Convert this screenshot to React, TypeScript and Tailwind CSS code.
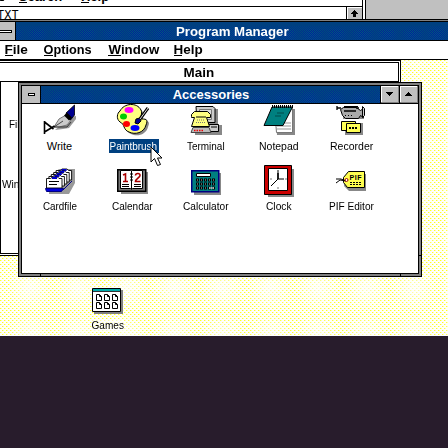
import React from "react";

const label = "font-['Liberation_Sans',sans-serif] text-[11px] leading-[13px] text-black whitespace-nowrap";
const title = "font-['Liberation_Sans',sans-serif] font-bold text-[13px] whitespace-nowrap";

function Fit({ children, w, className = "" }: { children: string; w: number; className?: string }) {
  const ref = React.useRef<HTMLSpanElement>(null);
  const [scale, setScale] = React.useState(1);
  React.useLayoutEffect(() => {
    if (ref.current) setScale(w / ref.current.offsetWidth);
  }, [w]);
  return (
    <span className="flex justify-center" style={{ width: w }}>
      <span ref={ref} className={`block shrink-0 ${className}`} style={{ transform: `scaleX(${scale})` }}>
        {children}
      </span>
    </span>
  );
}

function Svg({ children, w = 34, h = 32 }: { children: React.ReactNode; w?: number; h?: number }) {
  return (
    <svg width={w} height={h} viewBox={`0 0 ${w} ${h}`} fill="none" className="block shrink-0 overflow-visible">
      {children}
    </svg>
  );
}

const WriteIcon = () => (
  <Svg>
    <path d="M10 25l8-1 6-1 7-9v-3l-6 1z" fill="#999" />
    <path d="M9 22l5-8 7-4 5 5-4 5-8 2z" fill="#ccc" stroke="#777" strokeWidth="1" />
    <path d="M21 8L29.500 0v10l-4 5z" fill="#000090" stroke="#000" strokeWidth=".8" />
    <path d="M20.500 9l5 5" stroke="#000" strokeWidth="4" />
    <path d="M9 22l9-6M9 22h13l4-5" stroke="#222" strokeWidth=".8" />
    <path d="M-.5 16v13M-.5 17l9 7M-.5 27l10-6" stroke="#000" strokeWidth="1.600" />
  </Svg>
);

const PaintIcon = () => (
  <Svg>
    <g transform="translate(-2 -1)">
      <path d="M5 7c4-7 16-8 20-1 2 4-2 8 1 9 5 0 6 1 4 6-2 8-11 10-17 7-6-2-3-8-8-10-4-3-3-9 0-11z" fill="#888" transform="translate(2 2)" />
      <path d="M4 7c4-8 17-9 21-1 2 4-2 8 1 9 5 0 6 1 4 6-2 8-11 10-17 7-6-2-4-8-9-10-4-3-3-9 0-11z" fill="#ffff80" stroke="#000" />
      <ellipse cx="13" cy="6" rx="4.500" ry="3" fill="#f0f" />
      <ellipse cx="7.500" cy="12.500" rx="3.500" ry="3" fill="#0c0" />
      <ellipse cx="10.500" cy="20" rx="3.500" ry="3" fill="#f00" />
      <ellipse cx="19" cy="24" rx="4.500" ry="3" fill="#00f" />
      <path d="M19 19l1-4 4-1 1 3-3 3z" fill="#000090" stroke="#000" />
      <path d="M24 15l8-11" stroke="#000" strokeWidth="3" />
      <path d="M24 15l8-11" stroke="#ddd" />
    </g>
  </Svg>
);

const TerminalIcon = () => (
  <Svg>
    <path d="M9 4h18v16h4v10H4v-2h5z" fill="#888" />
    <path d="M5 1.500h17l2 2v14H6z" fill="#ccc" stroke="#000" />
    <path d="M8.500 4.500h12v10h-12z" fill="#ddd" stroke="#777" />
    <path d="M16.500 19.500h11v7h-11z" fill="#ccc" stroke="#000" />
    <path d="M20 22h6" stroke="#000" />
    <path d="M2 22.500h16l2 5H0z" fill="#bbb" stroke="#444" />
    <path d="M3 25.500h9" stroke="#e00" strokeWidth="1.500" strokeDasharray="1.500 1" />
    <path d="M.5 11.500v-2l3-3h13l3 3v3h-4l3 9h-18l3-9h-3z" fill="#ffff80" stroke="#000" />
    <path d="M5 12h10" stroke="#000" />
    <path d="M6 15h8M5 17.500h10" stroke="#777" strokeDasharray="1 1" />
  </Svg>
);

const NotepadIcon = () => (
  <Svg>
    <path d="M11 4h20v26H13z" fill="#888" />
    <path d="M10.500 3.500h18v24h-16z" fill="#fff" stroke="#777" />
    <path d="M13 18h14M13 21h14M13 24h14" stroke="#999" />
    <path d="M8 2h20.500L19 20.500H0z" fill="#008080" stroke="#000" />
    <path d="M8 1.500h21" stroke="#000" strokeWidth="3" strokeDasharray="1 1" />
    <path d="M13 8h7M11 11h6" stroke="#004a4a" />
  </Svg>
);

const RecorderIcon = () => (
  <Svg>
    <path d="M6 6h21v8H6zM8 18h18v12H8z" fill="#888" />
    <path d="M3.500 4.500l3-2h13l4 3 3-2v9l-3-2-2 3h-13l-3-3z" fill="#aaa" stroke="#000" />
    <path d="M0 1v4M0 3h4M19 3h3M7 6h12" stroke="#000" strokeWidth="1.300" />
    <path d="M25.500 1.500v11l2-2v-7z" fill="#ccc" stroke="#000" />
    <path d="M7 1.500h14" stroke="#000" />
    <path d="M8 10.500h9" stroke="#000" strokeDasharray="1 2" />
    <path d="M4.500 16.500h14v9h-14z" fill="#ff5" stroke="#000" />
    <path d="M9.500 18.500h14v9h-14z" fill="#ff5" stroke="#000" />
    <path d="M12 23h9" stroke="#000" strokeWidth="2" strokeDasharray="2 1" />
  </Svg>
);

const CardfileIcon = () => (
  <Svg>
    <path d="M5 11L14 4h16v14l-6 11H4z" fill="#999" />
    {[4, 3, 2, 1, 0].map((n) => (
      <g key={n} transform={`translate(${n * 2.400} ${-n * 2})`}>
        <path d="M1.500 23V13.500h4l2-1.500h5l1.500 1.500h3V23z" fill="#fff" stroke="#000" strokeWidth=".9" />
        <path d="M7 13h5" stroke="#00c" strokeWidth="2" />
      </g>
    ))}
    <path d="M4 16.500h10M4 19.500h8" stroke="#000" />
    <path d="M.5 23.500h18l-2 3H1.500z" fill="#00d" stroke="#000080" />
    <path d="M18 25l9-9" stroke="#000080" />
  </Svg>
);

const CalendarIcon = () => (
  <Svg>
    <path d="M3 7h27v22H3z" fill="#888" />
    <path d="M-.25 4.750h28v21.500h-28z" fill="#777" stroke="#000" strokeWidth="1.500" />
    <path d="M2.500 5.500h10l1 1 1-1h10v18h-10l-1 1-1-1h-10z" fill="#fff" stroke="#000" />
    <path d="M13.500 6v18M4 19.500h7M16 19.500h7M4 21.500h7M16 21.500h7" stroke="#000" />
    <path d="M12 9h3M12 12h3M12 15h3" stroke="#000" />
    <path d="M5 10l2.500-1v8M5 16.500h5" stroke="#a00" strokeWidth="1.600" />
    <path d="M17.500 10.500c0-3 5-2.500 4.500 0 0 2-4.500 3.500-4.500 6h5" stroke="#a00" strokeWidth="1.600" />
  </Svg>
);

const CalculatorIcon = () => (
  <Svg>
    <path d="M3 8h27v22H3z" fill="#888" />
    <path d="M.750 5.750h27v21h-27z" fill="#008080" stroke="#000080" strokeWidth="1.500" />
    <path d="M5.500 8.500h14v3h-14z" fill="#fff" stroke="#000" />
    {[15, 19, 23].map((y) => (
      <path key={y} d={`M5 ${y}h19`} stroke="#000" strokeWidth="3" strokeDasharray="3 1" />
    ))}
    {[15, 19, 23].map((y) => (
      <path key={y} d={`M6 ${y}h18`} stroke="#bbb" strokeDasharray="1 3" />
    ))}
    <path d="M18 23h5" stroke="#fff" />
  </Svg>
);

const ClockIcon = () => (
  <Svg>
    <path d="M4 4h26v28H4z" fill="#888" />
    <path d="M.500.500h27v29H.500z" fill="#c00" stroke="#000" />
    <path d="M4.500 3.500h19v22h-19z" fill="#fff" stroke="#000" />
    <path d="M14 5v9h6M14 14l-7 7" stroke="#000" />
    <path d="M14 8v6" stroke="#000" strokeWidth="1.500" />
    <path d="M14 22v2M6 14h2M21 14h2" stroke="#777" />
  </Svg>
);

const PifIcon = () => (
  <Svg>
    <path d="M8 15l4-6h17v17H12l-5-5z" fill="#888" />
    <path d="M6.500 12.500l5-6h16v16h-17l-4-5z" fill="#ffff50" stroke="#000" />
    <path d="M-1 14h5l5 2M-1 18l4-3 6 1" stroke="#000" />
    <circle cx="9.500" cy="15" r="1.500" fill="#fff" stroke="#900" />
    <text x="12.500" y="14.500" fontSize="7" fontWeight="bold" fontFamily="Liberation Sans, sans-serif" textLength="12" fill="#000">PIF</text>
    <path d="M13 17.500h11M13 19.500h11" stroke="#000" strokeDasharray="2 1" />
  </Svg>
);

const GamesIcon = () => (
  <Svg w={32} h={27}>
    <path d="M2 2h29v24H2z" fill="#808080" />
    <path d="M.500.500h28v23h-28z" fill="#fff" stroke="#000" />
    <path d="M1 2h27" stroke="#0aa" strokeWidth="2" />
    <path d="M1 3.500h27" stroke="#000" strokeWidth=".8" />
    {[4.500, 12.500, 20.500].map((x) =>
      [6.500, 14.500].map((y) => (
        <path key={`${x}-${y}`} d={`M${x} ${y}h3l2 2v4h-5zM${x + 3} ${y}v2h2`} stroke="#000" strokeWidth="1" />
      )),
    )}
  </Svg>
);

const apps: [string, number, () => React.JSX.Element][] = [
  ["Write", 25, WriteIcon],
  ["Paintbrush", 48, PaintIcon],
  ["Terminal", 38, TerminalIcon],
  ["Notepad", 40, NotepadIcon],
  ["Recorder", 43, RecorderIcon],
  ["Cardfile", 34, CardfileIcon],
  ["Calendar", 41, CalendarIcon],
  ["Calculator", 46, CalculatorIcon],
  ["Clock", 26, ClockIcon],
  ["PIF Editor", 45, PifIcon],
];

function Dither({ id }: { id: string }) {
  return (
    <svg className="absolute inset-0 h-full w-full">
      <defs>
        <pattern id={id} width="2" height="2" patternUnits="userSpaceOnUse">
          <path d="M0 0h1v1H0zM1 1h1v1H1z" fill="#006080" />
          <path d="M1 0h1v1H1zM0 1h1v1H0z" fill="#0018a0" />
        </pattern>
        <radialGradient id={`${id}-blob`}>
          <stop stopColor="#fff" />
          <stop offset="1" stopColor="#444" />
        </radialGradient>
        <pattern id={`${id}-row`} width="25" height="18" patternUnits="userSpaceOnUse">
          <rect y="4" width="25" height="18" fill={`url(#${id}-blob)`} />
        </pattern>
        <mask id={`${id}-mask`}>
          <rect width="100%" height="100%" fill={`url(#${id}-row)`} />
        </mask>
      </defs>
      <rect width="100%" height="100%" fill={`url(#${id})`} mask={`url(#${id}-mask)`} />
    </svg>
  );
}

function Desktop() {
  return (
    <svg className="absolute left-0 top-[60px]" width="448" height="276">
      <defs>
        <pattern id="dots" width="4" height="4" patternUnits="userSpaceOnUse">
          <path d="M0 0h1v1H0zM2 2h1v1H2z" fill="#ffff20" />
          <path d="M1 0h1v1H1zM3 2h1v1H3z" fill="#ffffa8" />
        </pattern>
        <pattern id="haze-grid" x="6" y="12" width="48" height="48" patternUnits="userSpaceOnUse">
          <rect width="48" height="48" fill="url(#haze)" />
        </pattern>
        <radialGradient id="haze">
          <stop stopColor="#fff" stopOpacity=".7" />
          <stop offset="1" stopColor="#fff" stopOpacity="0" />
        </radialGradient>
      </defs>
      <rect width="448" height="276" fill="#fffffc" />
      <rect width="448" height="276" fill="url(#dots)" />
      <rect width="448" height="276" fill="url(#haze-grid)" />
    </svg>
  );
}

function Menu({ text, w, left }: { text: string; w: number; left: number }) {
  return (
    <div className="relative h-[17px] shrink-0" style={{ marginLeft: left, width: w }}>
      <Fit w={w} className={`${title} leading-[17px]`}>{text}</Fit>
      <i className={`absolute bottom-[2px] left-0 h-px bg-black ${text[0] === "W" ? "w-[13px]" : text[0] === "O" ? "w-[9px]" : "w-[8px]"}`} />
    </div>
  );
}

function Arrow({ up = false }: { up?: boolean }) {
  return (
    <div className="flex h-[17px] w-[18px] items-center justify-center border-b border-r border-[#808080] bg-[#c0c0c0] shadow-[inset_1px_1px_0_#fff]">
      <svg width="7" height="4" shapeRendering="crispEdges">
        <path d={up ? "M0 4h7L3.500 0z" : "M0 0h7L3.500 4z"} />
      </svg>
    </div>
  );
}

export default function App() {
  return (
    <div className="relative h-[448px] w-[448px] overflow-hidden bg-[#281c2c]">
      <section className="absolute left-0 top-0 flex h-[19px] w-[448px] bg-[#c0c0c0]">
        <div className="h-[19px] w-[363px] border-r border-black bg-white">
          <div className="relative flex h-[7px] items-end overflow-hidden border-b border-black">
            <div className="absolute left-[-4px] top-[-12px] flex">
              <Fit w={8} className={`${title} leading-[17px]`}>t</Fit>
              <Menu text="Search" w={43} left={15} />
              <Menu text="Help" w={28} left={19} />
            </div>
          </div>
          <div className="flex h-[12px] justify-between overflow-hidden">
            <span className="-ml-[3px] font-['Liberation_Mono',monospace] text-[12px] leading-[19px]">TXT</span>
            <div className="flex w-[16px] items-center justify-center border-l border-black bg-[#c0c0c0] shadow-[inset_1px_1px_0_#fff]">
              <svg width="7" height="7" shapeRendering="crispEdges"><path d="M3.500 0L7 4H5v3H2V4H0z" /></svg>
            </div>
          </div>
        </div>
        <div className="w-[3px] border-r border-black bg-white" />
      </section>

      <Desktop />

      <section className="absolute left-0 top-[19px] w-[448px] bg-white">
        <div className="h-[3px] border-y border-black bg-[#808080]" />
        <div className="relative flex h-[18px] bg-[#004080]">
          <Dither id="pm" />
          <div className="relative flex w-[16px] items-center border-r border-black bg-[#c0c0c0]">
            <i className="h-[3px] w-[12px] border border-l-0 border-black bg-white" />
          </div>
          <div className="relative ml-[160px] flex text-white"><Fit w={113} className={`${title} leading-[19px]`}>Program Manager</Fit></div>
        </div>
        <div className="flex h-[20px] border-b border-t border-black">
          <Menu text="File" w={23} left={5} />
          <Menu text="Options" w={48} left={16} />
          <Menu text="Window" w={51} left={16} />
          <Menu text="Help" w={29} left={15} />
        </div>
      </section>

      <section className="absolute left-[-3px] top-[60px] h-[196px] w-[404px] border border-black bg-white p-px">
        <div className="h-full border border-black">
          <div className="flex h-[19px] justify-center border-b border-black">
            <Fit w={31} className={`${title} leading-[19px]`}>Main</Fit>
          </div>
          <div className="h-[171px] border-l border-black pl-[8px] pt-[36px]">
            <Fit w={58} className={label}>File Manager</Fit>
            <div className="-ml-[7px] mt-[47px]"><Fit w={70} className={label}>Windows Setup</Fit></div>
          </div>
        </div>
      </section>

      <section className="absolute left-[18px] top-[82px] h-[195px] w-[404px] border border-black bg-[#808080] p-[2px]">
        <i className="absolute bottom-0 left-[21px] h-[2px] w-px bg-black" />
        <i className="absolute bottom-0 right-[20px] h-[2px] w-px bg-black" />
        <i className="absolute bottom-[20px] right-0 h-px w-[2px] bg-black" />
        <div className="h-full border border-black bg-white">
          <div className="relative flex h-[18px] border-b border-black bg-[#004080]">
            <Dither id="acc" />
            <div className="relative flex w-[19px] items-center justify-center border-r border-black bg-[#c0c0c0]">
              <i className="h-[3px] w-[7px] border border-black bg-white" />
            </div>
            <div className="relative flex flex-1 justify-center text-white pl-[1px]">
              <Fit w={77} className={`${title} leading-[18px]`}>Accessories</Fit>
            </div>
            <div className="relative flex gap-px bg-black pl-px"><Arrow /><Arrow up /></div>
          </div>
          <div className="grid grid-cols-[repeat(5,73px)] auto-rows-[60px] pl-[1px] pt-[1px]">
            {apps.map(([name, w, Icon]) => (
              <div key={name} className="flex flex-col items-center">
                <div className="pl-[4px]"><Icon /></div>
                <div className={`relative mt-[2px] flex h-[14px] items-center justify-center px-[1px] ${name === "Paintbrush" ? "left-[1px] bg-[#004080]" : ""}`}>
                  <Fit w={w} className={`${label} ${name === "Paintbrush" ? "!text-white" : ""}`}>{name}</Fit>
                </div>
              </div>
            ))}
          </div>
        </div>
      </section>

      <svg className="absolute left-[150px] top-[146px]" width="14" height="22" viewBox="0 0 14 22">
        <path d="M1 1v15l3.500-3.500 3 7 3-1-3-6.500h4.500z" fill="#fff" stroke="#000" />
      </svg>

      <div className="absolute left-[90px] top-[288px] flex w-[35px] flex-col items-center">
        <div className="pl-[1px]"><GamesIcon /></div>
        <div className="mt-[4px] flex bg-white/60"><Fit w={32} className={label}>Games</Fit></div>
      </div>
    </div>
  );
}
